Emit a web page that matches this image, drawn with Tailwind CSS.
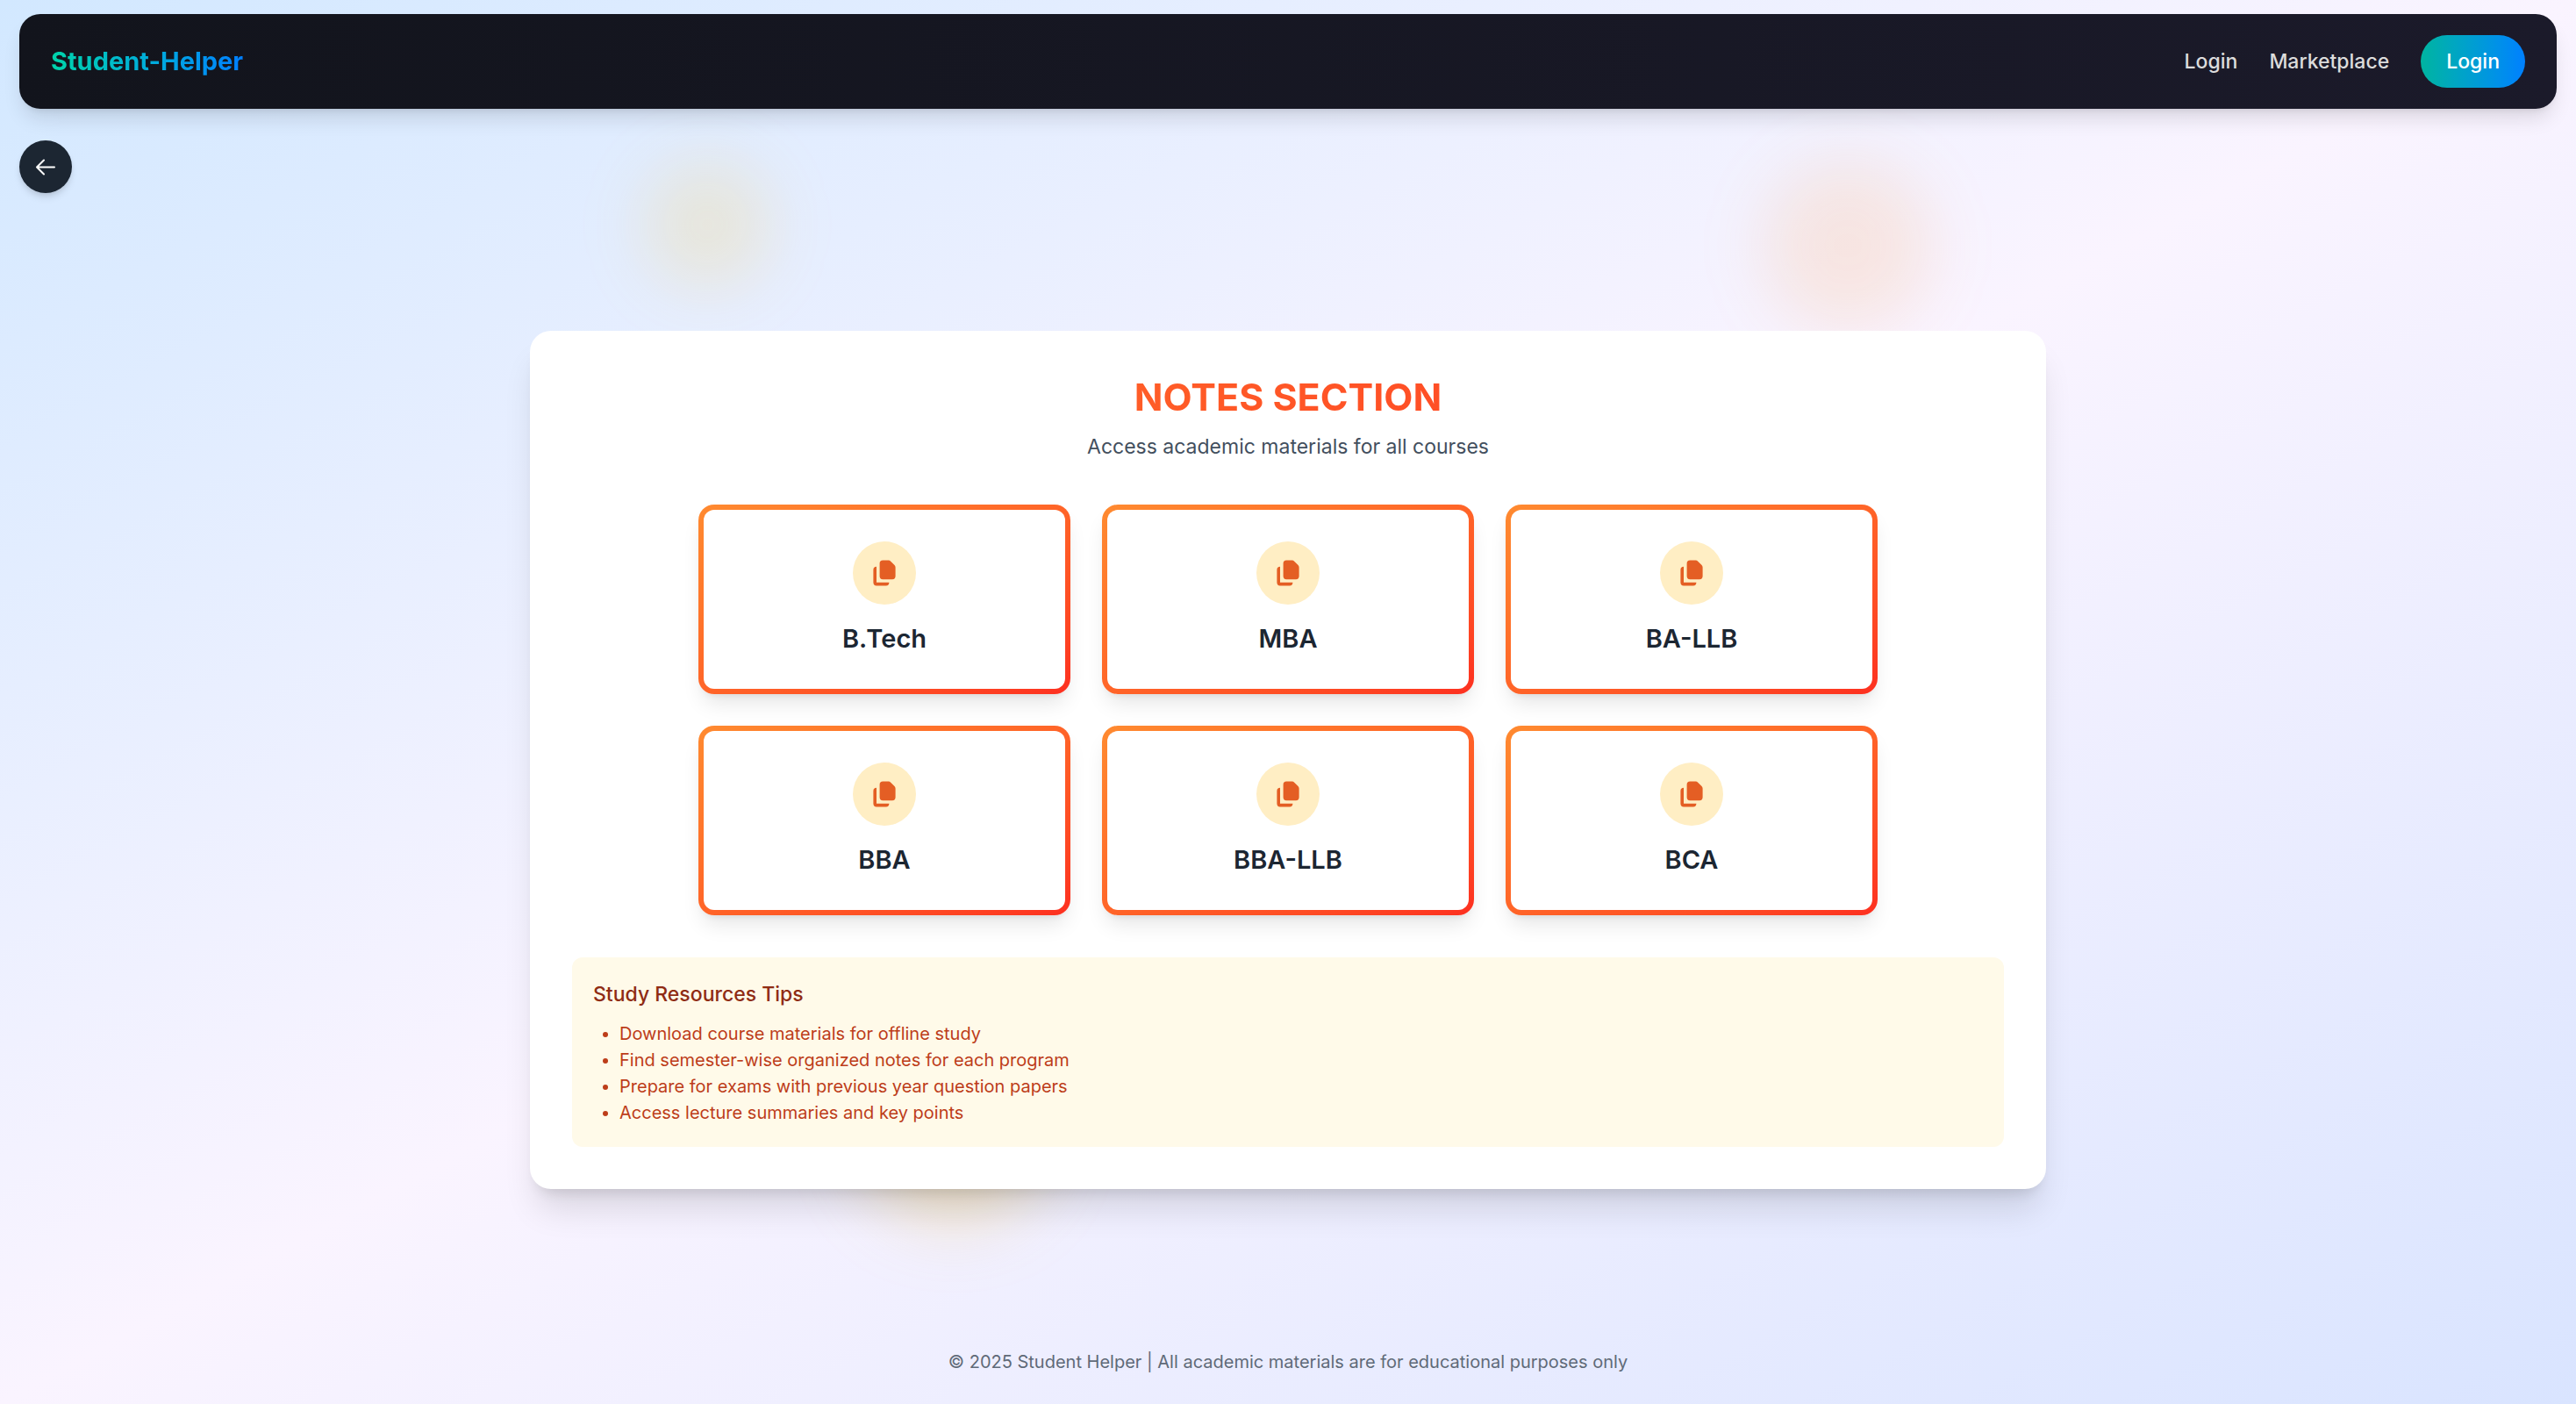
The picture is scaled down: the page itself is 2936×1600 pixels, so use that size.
<!DOCTYPE html>
<html lang="en">
<head>
<meta charset="utf-8">
<meta name="viewport" content="width=device-width, initial-scale=1">
<title>Student-Helper | Notes Section</title>
<script src="https://cdn.jsdelivr.net/npm/@tailwindcss/browser@4"></script>
</head>
<body class="relative isolate flex min-h-screen flex-col overflow-x-hidden bg-linear-to-br from-[#d2e8ff] via-[#faf4ff] to-[#d9e4ff] pt-4 font-['Inter',sans-serif] text-[23px] leading-[36px] text-[#1c2632]">

<svg class="hidden" aria-hidden="true">
  <symbol id="documents" viewBox="0 0 20 20">
    <path d="M9 2a2 2 0 00-2 2v8a2 2 0 002 2h6a2 2 0 002-2V6.414A2 2 0 0016.414 5L14 2.586A2 2 0 0012.586 2H9z"/>
    <path d="M3 8a2 2 0 012-2v10h8a2 2 0 01-2 2H5a2 2 0 01-2-2V8z"/>
  </symbol>
</svg>

<!-- Soft colour blobs behind the content -->
<div class="absolute left-1/4 top-[184px] -z-10 size-36 rounded-full bg-[#fdc020]/16 blur-[36px]"></div>
<div class="absolute right-1/4 top-[184px] -z-10 size-48 rounded-full bg-[#ff8920]/13 blur-[36px]"></div>
<div class="absolute left-1/3 top-[1176px] -z-10 size-54 rounded-full bg-[#f5c030]/27 blur-[40px]"></div>

<header class="mx-[22px] flex items-center justify-between rounded-3xl bg-linear-to-r from-[#12141c] to-[#1b1a2a] px-9 py-6 shadow-[0_15px_23px_-5px_rgba(0,0,0,0.12),0_6px_9px_-6px_rgba(0,0,0,0.12)]">
  <a href="#" class="bg-linear-to-r from-[#00d4aa] to-[#007fff] bg-clip-text text-[29px] leading-[42px] font-bold text-transparent">Student-Helper</a>
  <nav class="flex items-center gap-9 font-medium text-[#dcdcdc]">
    <a href="#">Login</a>
    <a href="#">Marketplace</a>
    <button type="button" class="rounded-full bg-linear-to-r from-[#00b4a0] to-[#0080ff] px-[29px] py-3 text-white">Login</button>
  </nav>
</header>

<button type="button" aria-label="Go back" class="mx-[22px] mt-9 flex size-[60px] items-center justify-center rounded-full bg-[#1c2632] text-white shadow-[0_6px_9px_-1px_rgba(0,0,0,0.1),0_3px_6px_-2px_rgba(0,0,0,0.1)]">
  <svg class="size-[30px]" viewBox="0 0 30 30" fill="none" stroke="currentColor" stroke-width="2" stroke-linecap="round" stroke-linejoin="round"><path d="M13 7.5 5 15.5l8 8M5 15.5h20"/></svg>
</button>

<main class="flex flex-1 items-center justify-center">
  <section class="w-full max-w-[1728px] rounded-3xl bg-white p-12 shadow-[0_30px_38px_-8px_rgba(0,0,0,0.12),0_12px_15px_-9px_rgba(0,0,0,0.12)]">
    <h1 class="mb-3 bg-linear-to-r from-[#ff732b] to-[#ff2d22] bg-clip-text text-center text-[43px] leading-[54px] font-bold text-transparent">NOTES SECTION</h1>
    <p class="text-center text-[#434f5e]">Access academic materials for all courses</p>

    <div class="mx-auto my-12 grid max-w-[1344px] grid-cols-3 gap-9 text-[29px] leading-[42px] font-semibold">
      <a href="#" class="rounded-[18px] bg-linear-to-br from-[#ff8a30] to-[#fd2f20] p-1.5 shadow-[0_15px_23px_-5px_rgba(0,0,0,0.1),0_6px_9px_-6px_rgba(0,0,0,0.1)]">
        <span class="flex flex-col items-center gap-[18px] rounded-xl bg-white p-9">
          <span class="flex size-18 items-center justify-center rounded-full bg-[#ffeec4] text-[#e45e24]"><svg class="size-9" fill="currentColor"><use href="#documents"/></svg></span>
          B.Tech
        </span>
      </a>
      <a href="#" class="rounded-[18px] bg-linear-to-br from-[#ff8a30] to-[#fd2f20] p-1.5 shadow-[0_15px_23px_-5px_rgba(0,0,0,0.1),0_6px_9px_-6px_rgba(0,0,0,0.1)]">
        <span class="flex flex-col items-center gap-[18px] rounded-xl bg-white p-9">
          <span class="flex size-18 items-center justify-center rounded-full bg-[#ffeec4] text-[#e45e24]"><svg class="size-9" fill="currentColor"><use href="#documents"/></svg></span>
          MBA
        </span>
      </a>
      <a href="#" class="rounded-[18px] bg-linear-to-br from-[#ff8a30] to-[#fd2f20] p-1.5 shadow-[0_15px_23px_-5px_rgba(0,0,0,0.1),0_6px_9px_-6px_rgba(0,0,0,0.1)]">
        <span class="flex flex-col items-center gap-[18px] rounded-xl bg-white p-9">
          <span class="flex size-18 items-center justify-center rounded-full bg-[#ffeec4] text-[#e45e24]"><svg class="size-9" fill="currentColor"><use href="#documents"/></svg></span>
          BA-LLB
        </span>
      </a>
      <a href="#" class="rounded-[18px] bg-linear-to-br from-[#ff8a30] to-[#fd2f20] p-1.5 shadow-[0_15px_23px_-5px_rgba(0,0,0,0.1),0_6px_9px_-6px_rgba(0,0,0,0.1)]">
        <span class="flex flex-col items-center gap-[18px] rounded-xl bg-white p-9">
          <span class="flex size-18 items-center justify-center rounded-full bg-[#ffeec4] text-[#e45e24]"><svg class="size-9" fill="currentColor"><use href="#documents"/></svg></span>
          BBA
        </span>
      </a>
      <a href="#" class="rounded-[18px] bg-linear-to-br from-[#ff8a30] to-[#fd2f20] p-1.5 shadow-[0_15px_23px_-5px_rgba(0,0,0,0.1),0_6px_9px_-6px_rgba(0,0,0,0.1)]">
        <span class="flex flex-col items-center gap-[18px] rounded-xl bg-white p-9">
          <span class="flex size-18 items-center justify-center rounded-full bg-[#ffeec4] text-[#e45e24]"><svg class="size-9" fill="currentColor"><use href="#documents"/></svg></span>
          BBA-LLB
        </span>
      </a>
      <a href="#" class="rounded-[18px] bg-linear-to-br from-[#ff8a30] to-[#fd2f20] p-1.5 shadow-[0_15px_23px_-5px_rgba(0,0,0,0.1),0_6px_9px_-6px_rgba(0,0,0,0.1)]">
        <span class="flex flex-col items-center gap-[18px] rounded-xl bg-white p-9">
          <span class="flex size-18 items-center justify-center rounded-full bg-[#ffeec4] text-[#e45e24]"><svg class="size-9" fill="currentColor"><use href="#documents"/></svg></span>
          BCA
        </span>
      </a>
    </div>

    <section class="rounded-xl bg-[#fffae9] p-6">
      <h2 class="mb-3 font-medium text-[#8f2c14]">Study Resources Tips</h2>
      <ul class="list-disc pl-[30px] text-[20px] leading-[30px] text-[#bd3d19]">
        <li>Download course materials for offline study</li>
        <li>Find semester-wise organized notes for each program</li>
        <li>Prepare for exams with previous year question papers</li>
        <li>Access lecture summaries and key points</li>
      </ul>
    </section>
  </section>
</main>

<footer class="pt-[25px] pb-[33px] text-center text-[20px] leading-[30px] text-[#5f6a78]">© 2025 Student Helper | All academic materials are for educational purposes only</footer>
</body>
</html>
